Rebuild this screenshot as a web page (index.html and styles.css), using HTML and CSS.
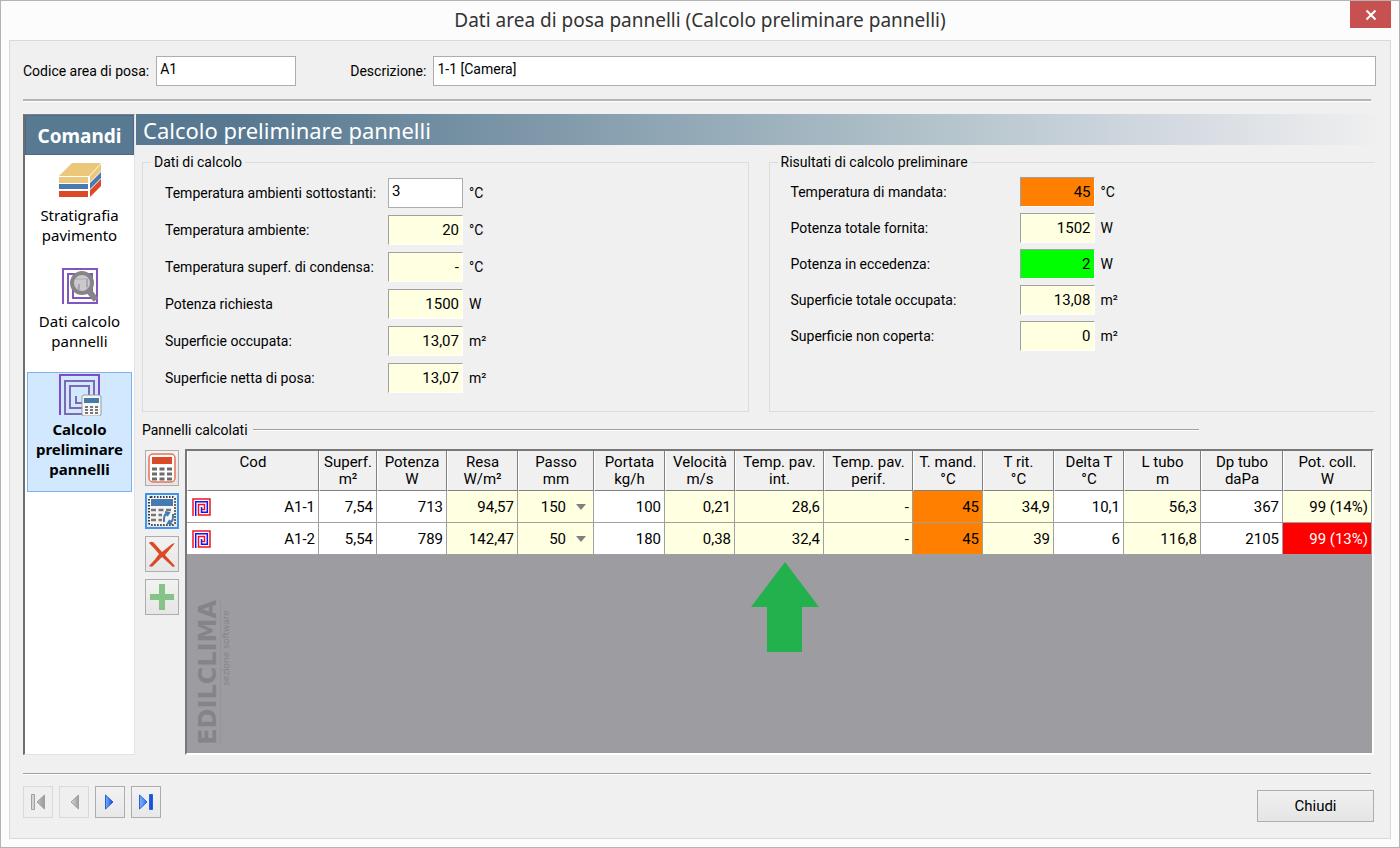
FILE: index.html
```html
<!DOCTYPE html>
<html lang="it">
<head>
    <meta charset="UTF-8">
    <meta name="viewport" content="width=device-width, initial-scale=1.0">
    <title>Dati area di posa pannelli</title>
    <link rel="stylesheet" href="styles.css">
</head>
<body>
    <div class="window">
        <!-- Title bar -->
        <header class="title-bar">
            <h1 class="window-title">Dati area di posa pannelli (Calcolo preliminare pannelli)</h1>
            <button class="close-button" aria-label="Chiudi finestra">
                <svg width="12" height="12" viewBox="0 0 12 12"><path d="M1.5 1.5l9 9M10.5 1.5l-9 9" stroke="#fff" stroke-width="2"/></svg>
            </button>
        </header>

        <div class="panel">
            <div class="area-row">
                <label for="codice">Codice area di posa:</label>
                <input class="text-input code-input" id="codice" type="text" value="A1">
                <label class="desc-label" for="descrizione">Descrizione:</label>
                <input class="text-input desc-input" id="descrizione" type="text" value="1-1 [Camera]">
            </div>
            <hr class="separator">

            <div class="main">
                <!-- Sidebar -->
                <nav class="sidebar">
                    <h2 class="sidebar-title">Comandi</h2>
                    <button class="command">
                        <svg class="command-icon" width="44" height="36" viewBox="0 0 44 36">
                            <path d="M1 14L14 1H43L31 14Z" fill="#ecc67b"/>
                            <path d="M1 15H30V21H1ZM32 14L43 2V9L32 20Z" fill="#ecc67b"/>
                            <path d="M1 22H30V27H1ZM32 21L43 10V16L32 27Z" fill="#467ab0"/>
                            <path d="M1 29H30V35H1ZM32 28L43 17V24L32 35Z" fill="#db4a26"/>
                        </svg>
                        Stratigrafia pavimento
                    </button>
                    <button class="command">
                        <svg class="command-icon" width="36" height="36" viewBox="0 0 36 36" fill="none">
                            <path d="M1 36V1H35V35H6V6H30V30H11V11H25V25H16V18" stroke="#8157bd" stroke-width="2"/>
                            <circle cx="20" cy="15" r="10" fill="#c4c4c6" fill-opacity=".9" stroke="#858585" stroke-width="4"/>
                            <path d="M17 16V22M25 11V19" stroke="#aaa4b8" stroke-width="2"/>
                            <path d="M27 23L34 32" stroke="#858585" stroke-width="6"/>
                        </svg>
                        Dati calcolo pannelli
                    </button>
                    <button class="command selected">
                        <svg class="command-icon" width="44" height="42" viewBox="0 0 44 42" fill="none">
                            <path d="M2 41V1H41V22" stroke="#7d4bd0" stroke-width="2"/>
                            <path d="M24 40H7V7H36V22M24 34H12V12H31V22M24 29H18V22" stroke="#7b6bb4" stroke-width="2"/>
                            <rect x="24" y="21" width="19" height="21" rx="2" fill="#f6f6f6" stroke="#9a9a9a"/>
                            <path d="M26 24H41V29H26Z" fill="#4779a9"/>
                            <path d="M27 33H41M27 36H41M27 39H41" stroke="#777" stroke-width="2" stroke-dasharray="3 2"/>
                        </svg>
                        Calcolo preliminare pannelli
                    </button>
                </nav>

                <section class="content">
                    <h2 class="banner">Calcolo preliminare pannelli</h2>

                    <div class="groups">
                        <fieldset class="group">
                            <legend>Dati di calcolo</legend>
                            <div class="fields">
                                <div class="field">
                                    <label for="t-sotto">Temperatura ambienti sottostanti:</label>
                                    <input class="text-input value-input" id="t-sotto" type="text" value="3">
                                    <span>°C</span>
                                </div>
                                <div class="field">
                                    <label for="t-amb">Temperatura ambiente:</label>
                                    <input class="value" id="t-amb" type="text" value="20" readonly>
                                    <span>°C</span>
                                </div>
                                <div class="field">
                                    <label for="t-cond">Temperatura superf. di condensa:</label>
                                    <input class="value" id="t-cond" type="text" value="-" readonly>
                                    <span>°C</span>
                                </div>
                                <div class="field">
                                    <label for="p-rich">Potenza richiesta</label>
                                    <input class="value" id="p-rich" type="text" value="1500" readonly>
                                    <span>W</span>
                                </div>
                                <div class="field">
                                    <label for="s-occ">Superficie occupata:</label>
                                    <input class="value" id="s-occ" type="text" value="13,07" readonly>
                                    <span>m²</span>
                                </div>
                                <div class="field">
                                    <label for="s-netta">Superficie netta di posa:</label>
                                    <input class="value" id="s-netta" type="text" value="13,07" readonly>
                                    <span>m²</span>
                                </div>
                            </div>
                        </fieldset>

                        <fieldset class="group results">
                            <legend>Risultati di calcolo preliminare</legend>
                            <div class="fields">
                                <div class="field">
                                    <label for="t-mand">Temperatura di mandata:</label>
                                    <input class="value orange" id="t-mand" type="text" value="45" readonly>
                                    <span>°C</span>
                                </div>
                                <div class="field">
                                    <label for="p-tot">Potenza totale fornita:</label>
                                    <input class="value" id="p-tot" type="text" value="1502" readonly>
                                    <span>W</span>
                                </div>
                                <div class="field">
                                    <label for="p-ecc">Potenza in eccedenza:</label>
                                    <input class="value green" id="p-ecc" type="text" value="2" readonly>
                                    <span>W</span>
                                </div>
                                <div class="field">
                                    <label for="s-tot">Superficie totale occupata:</label>
                                    <input class="value" id="s-tot" type="text" value="13,08" readonly>
                                    <span>m²</span>
                                </div>
                                <div class="field">
                                    <label for="s-non">Superficie non coperta:</label>
                                    <input class="value" id="s-non" type="text" value="0" readonly>
                                    <span>m²</span>
                                </div>
                            </div>
                        </fieldset>
                    </div>

                    <h3 class="list-title">Pannelli calcolati</h3>

                    <div class="list">
                        <!-- Table toolbar -->
                        <div class="toolbar">
                            <button class="tool" aria-label="Calcola">
                                <svg width="28" height="30" viewBox="0 0 28 30" fill="none">
                                    <rect x="1" y="1" width="26" height="28" rx="4" fill="#fff" stroke="#e8705a" stroke-width="1.5"/>
                                    <path d="M4 4H24V11H4Z" fill="#db4a26"/>
                                    <path d="M4 16H24M4 21H24M4 26H24" stroke="#6b6b6b" stroke-width="3" stroke-dasharray="5 2.5"/>
                                </svg>
                            </button>
                            <button class="tool active" aria-label="Ricalcola">
                                <svg width="30" height="32" viewBox="0 0 30 32" fill="none">
                                    <rect x="2" y="2" width="26" height="28" rx="2" fill="#f5f5f5" stroke="#000" stroke-width="1.5" stroke-dasharray="1.5 1.5"/>
                                    <path d="M4 4H26V11H4Z" fill="#467ab0"/>
                                    <path d="M4 15H25M4 20H15M4 25H15" stroke="#777" stroke-width="2.5" stroke-dasharray="5 2.5"/>
                                    <path d="M17 27V24Q17 19 21 18M18 17L22 18L20 21M26 19V22Q26 27 22 28M25 29L21 28L23 25" stroke="#467ab0" stroke-width="2"/>
                                </svg>
                            </button>
                            <button class="tool" aria-label="Elimina">
                                <svg width="28" height="28" viewBox="0 0 28 28">
                                    <path d="M2 2Q5 1 7 4L14 12L24 4L27 3L17 15L27 26L25 27L14 17L6 25Q4 28 1 26Q7 20 11 14Q7 9 1 3Z" fill="#db4a26"/>
                                </svg>
                            </button>
                            <button class="tool" aria-label="Aggiungi">
                                <svg width="26" height="26" viewBox="0 0 26 26"><path d="M10 0H16V10H25V16H16V26H10V16H1V10H10Z" fill="#86c386"/></svg>
                            </button>
                        </div>

                        <div class="grid">
                            <table class="panels">
                                <colgroup>
                                    <col class="w132"><col class="w58"><col class="w70"><col class="w71"><col class="w76">
                                    <col class="w71"><col class="w70"><col class="w89"><col class="w89"><col class="w70">
                                    <col class="w71"><col class="w70"><col class="w77"><col class="w82"><col class="w89">
                                </colgroup>
                                <thead>
                                    <tr>
                                        <th>Cod</th>
                                        <th>Superf.<br>m²</th>
                                        <th>Potenza<br>W</th>
                                        <th>Resa<br>W/m²</th>
                                        <th>Passo<br>mm</th>
                                        <th>Portata<br>kg/h</th>
                                        <th>Velocità<br>m/s</th>
                                        <th>Temp. pav.<br>int.</th>
                                        <th>Temp. pav.<br>perif.</th>
                                        <th>T. mand.<br>°C</th>
                                        <th>T rit.<br>°C</th>
                                        <th>Delta T<br>°C</th>
                                        <th>L tubo<br>m</th>
                                        <th>Dp tubo<br>daPa</th>
                                        <th>Pot. coll.<br>W</th>
                                    </tr>
                                </thead>
                                <tbody>
                                    <tr>
                                        <td>
                                            <div class="code-cell">
                                                <svg width="19" height="18" viewBox="0 0 19 18" fill="none" stroke-width="1.5">
                                                    <path d="M1 18V1H18V17H6.500V6.500H12.500V11.500H10" stroke="#f01420"/>
                                                    <path d="M3.700 18V3.700H15.300V14.300H9.500V9" stroke="#1414f0"/>
                                                </svg>
                                                <span>A1-1</span>
                                            </div>
                                        </td>
                                        <td>7,54</td>
                                        <td>713</td>
                                        <td class="calc">94,57</td>
                                        <td class="calc">
                                            <div class="select-wrap">
                                                <select class="step" aria-label="Passo A1-1">
                                                    <option>50</option>
                                                    <option selected>150</option>
                                                </select>
                                            </div>
                                        </td>
                                        <td>100</td>
                                        <td class="calc">0,21</td>
                                        <td class="calc">28,6</td>
                                        <td class="calc">-</td>
                                        <td class="orange">45</td>
                                        <td class="calc">34,9</td>
                                        <td>10,1</td>
                                        <td class="calc">56,3</td>
                                        <td>367</td>
                                        <td class="calc">99 (14%)</td>
                                    </tr>
                                    <tr>
                                        <td>
                                            <div class="code-cell">
                                                <svg width="19" height="18" viewBox="0 0 19 18" fill="none" stroke-width="1.5">
                                                    <path d="M1 18V1H18V17H6.500V6.500H12.500V11.500H10" stroke="#f01420"/>
                                                    <path d="M3.700 18V3.700H15.300V14.300H9.500V9" stroke="#1414f0"/>
                                                </svg>
                                                <span>A1-2</span>
                                            </div>
                                        </td>
                                        <td>5,54</td>
                                        <td>789</td>
                                        <td class="calc">142,47</td>
                                        <td class="calc">
                                            <div class="select-wrap">
                                                <select class="step" aria-label="Passo A1-2">
                                                    <option selected>50</option>
                                                    <option>150</option>
                                                </select>
                                            </div>
                                        </td>
                                        <td>180</td>
                                        <td class="calc">0,38</td>
                                        <td class="calc">32,4</td>
                                        <td class="calc">-</td>
                                        <td class="orange">45</td>
                                        <td class="calc">39</td>
                                        <td>6</td>
                                        <td class="calc">116,8</td>
                                        <td>2105</td>
                                        <td class="alert">99 (13%)</td>
                                    </tr>
                                </tbody>
                            </table>

                            <div class="watermark">
                                <span class="brand">EDILCLIMA</span>
                                <span class="brand-sub">sezione software</span>
                            </div>

                            <svg class="arrow" width="68" height="90" viewBox="0 0 68 90"><path d="M34 0L68 45H51V90H16V45H0Z" fill="#22b14c"/></svg>
                        </div>
                    </div>
                </section>
            </div>

            <hr class="separator thin">

            <!-- Record navigation -->
            <footer class="footer">
                <svg class="defs" width="0" height="0">
                    <linearGradient id="blue" x1="0" x2="1"><stop offset="0" stop-color="#7db2fb"/><stop offset="1" stop-color="#0c46d8"/></linearGradient>
                    <linearGradient id="gray" x1="0" x2="1"><stop offset="0" stop-color="#dcdcdc"/><stop offset="1" stop-color="#9a9a9a"/></linearGradient>
                </svg>
                <div class="nav-buttons">
                    <button class="nav-button" disabled aria-label="Primo">
                        <svg width="16" height="18" viewBox="0 0 16 18" fill="url(#gray)" stroke="#a0a0a0"><path d="M1.5 1.5H4.5V16.5H1.5ZM14.5 2V16L7 9Z"/></svg>
                    </button>
                    <button class="nav-button" disabled aria-label="Precedente">
                        <svg width="16" height="18" viewBox="0 0 16 18" fill="url(#gray)" stroke="#a0a0a0"><path d="M12.5 2V16L5 9Z"/></svg>
                    </button>
                    <button class="nav-button" aria-label="Successivo">
                        <svg width="16" height="18" viewBox="0 0 16 18" fill="url(#blue)" stroke="#2460dc"><path d="M3.5 2V16L11 9Z"/></svg>
                    </button>
                    <button class="nav-button" aria-label="Ultimo">
                        <svg width="16" height="18" viewBox="0 0 16 18" fill="url(#blue)" stroke="#2460dc"><path d="M1.5 2V16L9 9ZM11.5 1.5H14.5V16.5H11.5Z"/></svg>
                    </button>
                </div>
                <button class="chiudi">Chiudi</button>
            </footer>
        </div>
    </div>
</body>
</html>
```
FILE: styles.css
```css
* {
    margin: 0;
    padding: 0;
    box-sizing: border-box;
}

body {
    background-color: #fcfcfc;
    color: #000;
    font-family: Roboto, "Liberation Sans", Arial, sans-serif;
    font-size: 14px;
    line-height: 20px;
}

button, input, select {
    font: inherit;
    color: inherit;
}

.window {
    display: flex;
    flex-direction: column;
    min-height: 100vh;
    padding: 0 8px 8px;
    border: 1px solid #b4b4b4;
}

/* Title bar */
.title-bar {
    display: flex;
    justify-content: flex-end;
    height: 39px;
}

.window-title {
    flex: 1;
    padding-left: 41px;
    font-family: "Noto Sans", "Open Sans", sans-serif;
    font-size: 19px;
    font-weight: 400;
    line-height: 39px;
    text-align: center;
    color: #333;
}

.close-button {
    display: flex;
    align-items: center;
    justify-content: center;
    width: 41px;
    height: 27px;
    border: none;
    background-color: #c75050;
}

/* Panel */
.panel {
    flex: 1;
    display: flex;
    flex-direction: column;
    padding: 15px 14px 16px 13px;
    border: 1px solid #d9d9d9;
    background-color: #f0f0f0;
}

.area-row {
    display: flex;
    align-items: center;
}

.text-input {
    height: 30px;
    padding: 0 3px 4px;
    border: 1px solid #abadb3;
    background-color: #fff;
}

.code-input {
    width: 140px;
    margin-left: 7px;
}

.desc-label {
    margin: 0 7px 0 54px;
}

.desc-input {
    flex: 1;
}

.separator {
    height: 3px;
    margin: 13px 5px 12px 0;
    border: none;
    border-top: 2px solid #b4b4b4;
    border-bottom: 1px solid #fff;
}

.separator.thin {
    height: 2px;
    margin: 18px 5px 11px 0;
    border-top: 1px solid #a0a0a0;
}

.main {
    flex: 1;
    display: flex;
    gap: 1px;
}

/* Sidebar */
.sidebar {
    display: flex;
    flex-direction: column;
    width: 112px;
    border: 1px solid #e3e3e3;
    border-top-color: #828282;
    border-left: 2px solid #6e6e6e;
    background-color: #fff;
    font-family: "Noto Sans", "Open Sans", sans-serif;
    font-size: 15px;
}

.sidebar-title {
    height: 40px;
    margin-bottom: 2px;
    border: 1px solid #4d6790;
    background-color: #587992;
    color: #fff;
    font-size: 19px;
    line-height: 40px;
    text-align: center;
}

.command {
    display: flex;
    flex-direction: column;
    align-items: center;
    height: 102px;
    margin: 0 2px 4px;
    padding: 4px;
    border: 1px solid transparent;
    background: none;
}

.command-icon {
    flex-shrink: 0;
    margin-bottom: 7px;
}

.command.selected {
    height: 120px;
    margin-top: 3px;
    padding-top: 1px;
    border-color: #7eb4ea;
    background-color: #d1e8ff;
    font-weight: 700;
}

.selected .command-icon {
    margin-bottom: 3px;
}

/* Content */
.content {
    flex: 1;
    display: flex;
    flex-direction: column;
    min-width: 0;
}

.banner {
    height: 31px;
    padding-left: 7px;
    background: linear-gradient(to right, #577890 8%, #b4c4cc 65%, #d3d9e1 83%, #efefef);
    color: #fff;
    font-family: "Noto Sans", "Open Sans", sans-serif;
    font-size: 22px;
    font-weight: 400;
    line-height: 32px;
}

.groups {
    display: grid;
    grid-template-columns: 1fr 1fr;
    gap: 20px;
    padding: 7px 1px 0 6px;
}

.group {
    min-width: 0;
    height: 260px;
    border: 1px solid #dcdcdc;
}

.results {
    border-right: none;
}

.group legend {
    margin-left: 8px;
    padding: 0 3px;
}

.fields {
    display: flex;
    flex-direction: column;
    gap: 7px;
    padding: 6px 22px;
}

.results .fields {
    gap: 6px;
    padding: 5px 21px;
}

.field {
    display: flex;
    align-items: center;
    gap: 6px;
}

.field label {
    width: 217px;
}

.results .field label {
    width: 223px;
}

.value, .value-input {
    width: 75px;
    height: 30px;
    font-size: 15px;
}

.value {
    padding: 0 3px;
    border: 1px solid #fff;
    border-top-color: #a0a0a0;
    border-left-color: #a0a0a0;
    background-color: #ffffe1;
    text-align: right;
}

.orange {
    background-color: #ff8000;
}

.green {
    background-color: #00ff00;
}

.list-title {
    display: flex;
    align-items: center;
    gap: 5px;
    margin: 8px 177px 9px 6px;
    font-size: 14px;
    font-weight: 400;
}

.list-title::after {
    content: "";
    flex: 1;
    border-top: 1px solid #a0a0a0;
    border-bottom: 1px solid #fff;
}

/* List */
.list {
    flex: 1;
    display: flex;
    gap: 6px;
    padding: 0 2px 0 9px;
}

.toolbar {
    display: flex;
    flex-direction: column;
    gap: 7px;
    padding-top: 1px;
}

.tool {
    display: flex;
    align-items: center;
    justify-content: center;
    width: 34px;
    height: 36px;
    border: 1px solid #adadad;
    background: linear-gradient(#f2f2f2, #e6e6e6);
}

.tool.active {
    border: 2px solid #3c96f0;
}

.grid {
    flex: 1;
    position: relative;
    border: 2px solid #fff;
    border-top-color: #787878;
    border-left-color: #787878;
    background-color: #9d9ca1;
}

.panels {
    width: 100%;
    table-layout: fixed;
    border-spacing: 0;
    font-size: 15px;
}

.w58 { width: 58px; }
.w70 { width: 70px; }
.w71 { width: 71px; }
.w76 { width: 76px; }
.w77 { width: 77px; }
.w82 { width: 82px; }
.w89 { width: 89px; }
.w132 { width: 132px; }

.panels th {
    height: 40px;
    padding-top: 3px;
    padding-bottom: 2px;
    border-right: 1px solid #808080;
    border-bottom: 1px solid #808080;
    border-left: 1px solid #fff;
    background-color: #f0f0f0;
    font-weight: 400;
    line-height: 17px;
    vertical-align: top;
}

.panels td {
    height: 32px;
    padding: 0 3px;
    border-right: 1px solid #a0a0a0;
    border-bottom: 1px solid #a0a0a0;
    background-color: #fff;
    text-align: right;
}

.panels td.calc {
    background-color: #ffffe1;
}

.panels td.orange {
    background-color: #ff8000;
}

.panels td.alert {
    background-color: #ff0000;
    color: #fff;
}

.code-cell {
    display: flex;
    align-items: center;
    justify-content: space-between;
    padding-left: 2px;
}

.select-wrap {
    position: relative;
}

.select-wrap::after {
    content: "";
    position: absolute;
    top: 7px;
    right: 4px;
    border: 5px solid transparent;
    border-top: 6px solid #808080;
    border-bottom: none;
    pointer-events: none;
}

.step {
    width: 100%;
    padding-right: 24px;
    border: none;
    background: none;
    appearance: none;
    text-align: right;
    text-align-last: right;
}

/* Vertical logo on the empty area of the grid */
.watermark {
    position: absolute;
    bottom: 8px;
    left: 9px;
    display: flex;
    flex-direction: column;
    align-items: flex-end;
    writing-mode: vertical-rl;
    transform: rotate(180deg);
    font-family: "DejaVu Sans", sans-serif;
    color: #858589;
}

.brand {
    border-left: 1px solid #94939a;
    font-size: 24px;
    font-weight: 700;
    line-height: 24px;
}

.brand-sub {
    margin-bottom: 10px;
    font-size: 9px;
    line-height: 10px;
}

.arrow {
    position: absolute;
    top: 111px;
    left: 50.5%;
    margin-left: -34px;
}

/* Footer */
.footer {
    display: flex;
    justify-content: space-between;
    padding-right: 2px;
}

.defs {
    position: absolute;
}

.nav-buttons {
    display: flex;
    gap: 6px;
}

.nav-button {
    display: flex;
    align-items: center;
    justify-content: center;
    width: 30px;
    height: 32px;
    border: 1px solid #adadad;
    background: linear-gradient(#f2f2f2, #e8e8e8);
}

.nav-button:disabled {
    border-color: #d9d9d9;
    background: #efefef;
}

.chiudi {
    width: 117px;
    height: 32px;
    margin-top: 4px;
    border: 1px solid #adadad;
    background: linear-gradient(#f0f0f0, #e5e5e5);
    font-size: 15px;
}
```
